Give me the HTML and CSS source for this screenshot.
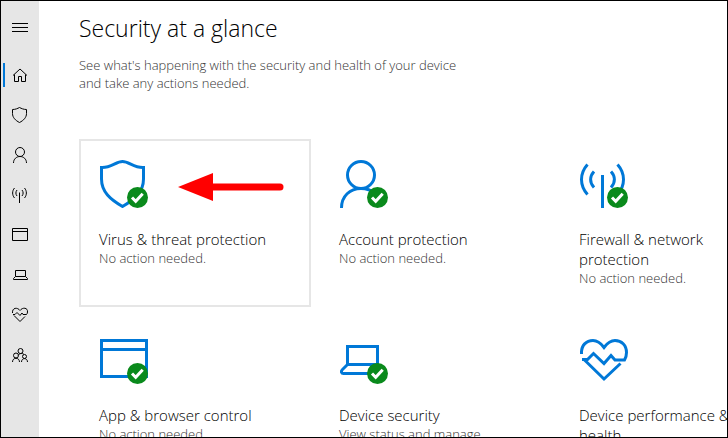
FILE: index.html
```
<!DOCTYPE html>
<html lang="en">
<head>
    <meta charset="UTF-8">
    <meta name="viewport" content="width=device-width, initial-scale=1.0">
    <title>Security at a glance</title>
    <link rel="stylesheet" href="styles.css">
</head>
<body>
    <svg class="defs" aria-hidden="true">
        <symbol id="badge" viewBox="0 0 21 21">
            <circle cx="10.5" cy="10.5" r="10.5" fill="#0a8a1c"/>
            <path d="M5 10.5l3.7 3.8 7-7.5" fill="none" stroke="#fff" stroke-width="3"/>
        </symbol>
    </svg>
    <div class="window">
        <nav class="sidebar">
            <button class="nav-item menu" aria-label="Menu">
                <svg viewBox="0 0 16 16"><path d="M0 4.500h16M0 8.500h16M0 12.500h16"/></svg>
            </button>
            <a href="#" class="nav-item active" aria-label="Home">
                <svg viewBox="0 0 16 16"><path d="M1 8.500L8 2l7 6.500M2.500 7.500v7h4v-5h3v5h4v-7"/></svg>
            </a>
            <a href="#" class="nav-item" aria-label="Virus and threat protection">
                <svg viewBox="0 0 16 16"><path d="M.5 2.500C3.500 2.500 5.500 1.500 7.500.5c2 1 4 2 7 2v4c0 4-3 7-7 9-4-2-7-5-7-9z"/></svg>
            </a>
            <a href="#" class="nav-item" aria-label="Account protection">
                <svg viewBox="0 0 16 16"><circle cx="8" cy="5" r="4.500"/><path d="M1.500 16c0-4 3-6.500 6.500-6.500s6.500 2.500 6.500 6.500"/></svg>
            </a>
            <a href="#" class="nav-item" aria-label="Firewall and network protection">
                <svg viewBox="0 0 16 16"><path d="M7.500 5.500V16M5 3c-1.500 2-1.500 4 0 6M10 3c1.500 2 1.500 4 0 6M2.500 1c-2.500 3-2.500 7 0 10M12.500 1c2.500 3 2.500 7 0 10"/></svg>
            </a>
            <a href="#" class="nav-item" aria-label="App and browser control">
                <svg viewBox="0 0 16 16"><path d="M.5 1.500h15v12H.5zM.5 4.500h15"/></svg>
            </a>
            <a href="#" class="nav-item" aria-label="Device security">
                <svg viewBox="0 0 16 16"><path d="M3.500 3.500h10v6h-10zM3.500 9.500l-2 2v1h14v-1l-2-2"/></svg>
            </a>
            <a href="#" class="nav-item" aria-label="Device performance and health">
                <svg viewBox="0 0 16 16"><path d="M.5 6C0 .5 5.500 0 8 3.500 10.500 0 16 .5 15.500 5c0 1-.3 1.700-1 2.500h-3.500L10 6 8 8.500 5 5.500l-2 2H1M2 8.500l6 6 5-5"/></svg>
            </a>
            <a href="#" class="nav-item" aria-label="Family options">
                <svg viewBox="0 0 16 16"><circle cx="8.500" cy="4" r="2.500"/><circle cx="4" cy="8.500" r="2.500"/><circle cx="12.500" cy="9.500" r="2"/><path d="M.5 15c0-5 7-5 7 0M9.500 15c0-4.500 6-4.500 6 0M6 8.500c1.500-2.500 4.500-2.500 6-1"/></svg>
            </a>
        </nav>

        <main class="content">
            <h1>Security at a glance</h1>
            <p class="intro">See what's happening with the security and health of your device and take any actions needed.</p>

            <div class="tiles">
                <a href="#" class="tile selected">
                    <div class="icon">
                        <svg viewBox="0 0 48 48"><path d="M1.500 7.500C11 8 16 1.500 22.500 1.500S34 8 43.500 7.500V19c0 13-9 20.500-21 27.500C10.500 39.500 1.500 32 1.500 19z"/></svg>
                        <svg class="badge"><use href="#badge"/></svg>
                    </div>
                    <svg class="arrow" viewBox="0 0 106 28"><path d="M0 14L35 0v28z" fill="#f00"/><path d="M34 14h68" stroke="#f00" stroke-width="7" stroke-linecap="round"/></svg>
                    <h2>Virus &amp; threat protection</h2>
                    <p>No action needed.</p>
                </a>
                <a href="#" class="tile">
                    <div class="icon">
                        <svg viewBox="0 0 48 48"><circle cx="21" cy="15" r="13.500"/><path d="M1.500 48C1.500 36 10 28.500 21 28.500S41 36 41 46.500"/></svg>
                        <svg class="badge"><use href="#badge"/></svg>
                    </div>
                    <h2>Account protection</h2>
                    <p>No action needed.</p>
                </a>
                <a href="#" class="tile">
                    <div class="icon">
                        <svg viewBox="0 0 48 48"><path d="M22.500 15v33M14 11.500c-4.500 5-4.500 11 0 16M31 11.500c4.500 5 4.500 11 0 16M7.500 4.500c-8 9-8 21 0 30M37.500 4.500c8 9 8 21 0 30"/></svg>
                        <svg class="badge"><use href="#badge"/></svg>
                    </div>
                    <h2>Firewall &amp; network protection</h2>
                    <p>No action needed.</p>
                </a>
                <a href="#" class="tile">
                    <div class="icon">
                        <svg viewBox="0 0 48 48"><path d="M1.500 4.500h45v36h-45zM1.500 13.500h45"/></svg>
                        <svg class="badge"><use href="#badge"/></svg>
                    </div>
                    <h2>App &amp; browser control</h2>
                    <p>No action needed.</p>
                </a>
                <a href="#" class="tile">
                    <div class="icon">
                        <svg viewBox="0 0 48 48"><path d="M7.500 10.500h30v18h-30zM7.500 28.500l-5 5c-2 2-1 4 1 4H43"/></svg>
                        <svg class="badge"><use href="#badge"/></svg>
                    </div>
                    <h2>Device security</h2>
                    <p>View status and manage hardware security features</p>
                </a>
                <a href="#" class="tile">
                    <div class="icon">
                        <svg viewBox="0 0 48 48"><path d="M1.500 18C1 9 6.500 4.500 13 4.500c5 0 8 3 11 7 3-4 6-7 11-7 6.500 0 11.500 4.500 11.500 12 0 3-.5 5-2 7.500H35l-4-4.500-7 8L13.500 17.500l-6 6H2M4 23.500L24 43l16.500-15.500"/></svg>
                    </div>
                    <h2>Device performance &amp; health</h2>
                    <p>No action needed.</p>
                </a>
            </div>
        </main>
    </div>
</body>
</html>
```
FILE: styles.css
```
* {
    box-sizing: border-box;
}
body {
    margin: 0;
    font-family: "Open Sans", "Noto Sans", sans-serif;
    color: #000;
    background: #fff;
}
h1, h2, p {
    margin: 0;
}
.defs {
    position: absolute;
    width: 0;
    height: 0;
}
.window {
    display: flex;
    height: 100vh;
    border: 1px solid #000;
    overflow: hidden;
}

/* left navigation */
.sidebar {
    flex: 0 0 38px;
    padding-top: 6px;
    background: #e6e6e6;
}
.nav-item {
    display: flex;
    align-items: center;
    justify-content: center;
    width: 100%;
    height: 40px;
    padding: 0;
    border: none;
    background: none;
    position: relative;
}
.nav-item svg {
    width: 16px;
    height: 16px;
    fill: none;
    stroke: #000;
    stroke-width: 1;
}
.menu {
    margin-bottom: 8px;
}
.active::before {
    content: "";
    position: absolute;
    left: 2px;
    top: 8px;
    width: 2px;
    height: 24px;
    background: #0078d7;
}

/* page */
.content {
    flex: 1;
    min-width: 0;
    padding: 11px 0 0 40px;
    overflow: hidden;
}
h1 {
    font-size: 23px;
    font-weight: 300;
    line-height: 32px;
}
.intro {
    max-width: 392px;
    margin-top: 12px;
    font-size: 13px;
    font-weight: 300;
    line-height: 18px;
    color: #333;
}
.tiles {
    display: grid;
    grid-template-columns: repeat(3, 232px);
    gap: 8px;
    margin-top: 47px;
}
.tile {
    position: relative;
    height: 168px;
    padding: 19px 18px;
    border: 2px solid transparent;
    color: #000;
    text-decoration: none;
}
.selected {
    border-color: #e6e6e6;
}
.icon {
    position: relative;
    width: 48px;
    height: 48px;
    margin: 0 0 21px 1px;
}
.icon svg {
    display: block;
    width: 48px;
    height: 48px;
    fill: none;
    stroke: #0078d7;
    stroke-width: 3;
}
.icon .badge {
    position: absolute;
    right: 0;
    bottom: 0;
    width: 21px;
    height: 21px;
    stroke: none;
}
.arrow {
    position: absolute;
    left: 97px;
    top: 32px;
    width: 106px;
    height: 28px;
}
.tile h2 {
    font-size: 15px;
    font-weight: 300;
    line-height: 20px;
}
.tile p {
    font-size: 13px;
    font-weight: 300;
    line-height: 19px;
    color: #333;
}
```
